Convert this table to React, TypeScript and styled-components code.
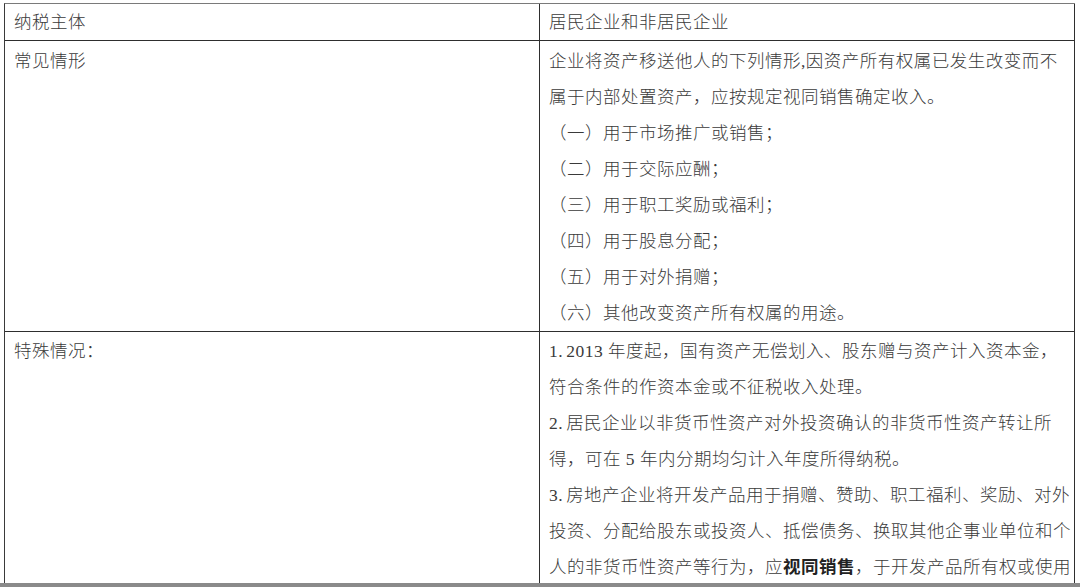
import styled, { createGlobalStyle } from 'styled-components';

const GlobalStyle = createGlobalStyle`
  html, body {
    margin: 0;
    padding: 0;
    background: #fff;
  }
  body {
    font-family: "Liberation Serif", "Noto Sans CJK SC", serif;
  }
`;

const Page = styled.div`
  padding: 3px 0 0 4px;
  width: 1080px;
  height: 587px;
  box-sizing: border-box;
  overflow: hidden;
  position: relative;

  &::after {
    content: '';
    position: absolute;
    left: 0;
    right: 0;
    top: 583px;
    height: 4px;
    background: #8a8a8a;
  }
`;

const Table = styled.div`
  box-sizing: border-box;
  width: 1071px;
  border-top: 1px solid #7a7a7a;
  border-left: 1px solid #3a3a3a;
`;

const TableRow = styled.div<{$first: boolean}>`
  display: grid;
  grid-template-columns: 535px minmax(0, 1fr);
  border-top: ${p => (p.$first ? 'none' : '1px solid #2e2e2e')};
`;

const Cell = styled.div<{$top: number}>`
  padding: ${p => p.$top}px 4px 0 9px;
  font-size: 17.5px;
  font-weight: 300;
  line-height: 36px;
  color: #3a3a3a;
  letter-spacing: 0.5px;
  min-width: 0;
  border-right: 1px solid #2e2e2e;
`;

const SubjectCell = styled(Cell)``;

const DetailCell = styled(Cell)``;

const Line = styled.div`
  white-space: nowrap;
`;

const Strong = styled.b`
  font-weight: 700;
  color: #222;
`;

const Gap = styled.span`
  margin-left: 3px;
`;

type Row = {
  subject: string;
  lines: React.ReactNode[];
  top?: number;
};

const rows: Row[] = [
  {subject: '纳税主体', lines: ['居民企业和非居民企业']},
  {
    subject: '常见情形',
    top: 2,
    lines: [
      '企业将资产移送他人的下列情形,因资产所有权属已发生改变而不',
      '属于内部处置资产，应按规定视同销售确定收入。',
      '（一）用于市场推广或销售；',
      '（二）用于交际应酬；',
      '（三）用于职工奖励或福利；',
      '（四）用于股息分配；',
      '（五）用于对外捐赠；',
      '（六）其他改变资产所有权属的用途。',
    ],
  },
  {
    subject: '特殊情况：',
    top: 1,
    lines: [
      <>1.<Gap />2013 年度起，国有资产无偿划入、股东赠与资产计入资本金，</>,
      '符合条件的作资本金或不征税收入处理。',
      <>2.<Gap />居民企业以非货币性资产对外投资确认的非货币性资产转让所</>,
      '得，可在 5 年内分期均匀计入年度所得纳税。',
      <>3.<Gap />房地产企业将开发产品用于捐赠、赞助、职工福利、奖励、对外</>,
      '投资、分配给股东或投资人、抵偿债务、换取其他企事业单位和个',
      <>
        人的非货币性资产等行为，应<Strong>视同销售</Strong>，于开发产品所有权或使用
      </>,
    ],
  },
];

function App() {
  return (
    <>
      <GlobalStyle />
      <Page>
        <Table>
          {rows.map((row, i) => (
            <TableRow key={i} $first={i === 0}>
              <SubjectCell $top={row.top ?? 0}>{row.subject}</SubjectCell>
              <DetailCell $top={row.top ?? 0}>
                {row.lines.map((line, j) => (
                  <Line key={j}>{line}</Line>
                ))}
              </DetailCell>
            </TableRow>
          ))}
        </Table>
      </Page>
    </>
  );
}

export default App;
